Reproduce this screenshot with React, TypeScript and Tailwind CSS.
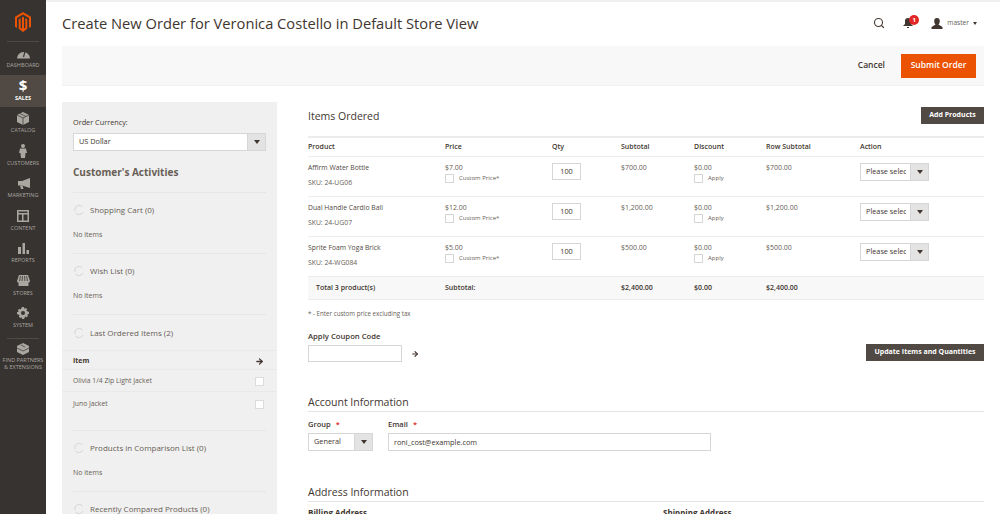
import { ArrowRight, Search } from 'lucide-react';
import type { ReactNode } from 'react';

function Caret() {
  return <span className="block h-0 w-0 border-x-[3px] border-t-[4px] border-x-transparent border-t-[#41362f]" />;
}

function SelectBox({ label, width, textWidth }: { label: string; width: string; textWidth: string }) {
  return (
    <div className={`flex h-[18px] border border-[#d6d6d6] bg-white text-[7.3px] leading-none text-[#41362f] ${width}`}>
      <span className={`flex items-center overflow-hidden whitespace-nowrap pl-[5px] ${textWidth}`}>{label}</span>
      <span className="ml-auto flex w-[18px] items-center justify-center border-l border-[#d6d6d6] bg-[#e3e3e3]">
        <Caret />
      </span>
    </div>
  );
}

function Check({ className = '' }: { className?: string }) {
  return <span className={`block size-[9px] border border-[#d6d6d6] bg-white ${className}`} />;
}

function NavItem({ label, icon, active }: { label: ReactNode; icon: ReactNode; active?: boolean }) {
  return (
    <div
      className={`flex h-[32.5px] flex-col items-center justify-end pb-[5px] text-center text-[5.5px] leading-[7.5px] ${
        active ? 'bg-[#514943] font-bold text-white' : 'text-[#aaa6a0]'
      }`}
    >
      <span className="mb-[2px] flex h-[14px] items-center justify-center">{icon}</span>
      <span>{label}</span>
    </div>
  );
}

const iconFill = '#aaa6a0';

const navItems: { label: string; icon: ReactNode; active?: boolean }[] = [
  {
    label: 'DASHBOARD',
    icon: (
      <svg width="13" height="11" viewBox="0 0 13 11">
        <path d="M0 10.500 A6.500 6.500 0 0 1 13 10.500 Z" fill={iconFill} />
        <path d="M6.500 9 L8 3.500" stroke="#373330" strokeWidth="1.200" />
      </svg>
    ),
  },
  {
    label: 'SALES',
    active: true,
    icon: <span className="text-[15px] font-bold leading-none text-white">$</span>,
  },
  {
    label: 'CATALOG',
    icon: (
      <svg width="12" height="13" viewBox="0 0 12 13">
        <path d="M6 0 L12 3 L12 10 L6 13 L0 10 L0 3 Z" fill={iconFill} />
        <path d="M0 3 L6 6 L12 3 M6 6 L6 13 M3 1.500 L9 4.500" stroke="#373330" strokeWidth="0.700" fill="none" />
      </svg>
    ),
  },
  {
    label: 'CUSTOMERS',
    icon: (
      <svg width="8" height="14" viewBox="0 0 8 14">
        <circle cx="4" cy="2" r="2" fill={iconFill} />
        <path d="M1 4.500 H7 L8 9 H6.500 L6 14 H2 L1.500 9 H0 Z" fill={iconFill} />
      </svg>
    ),
  },
  {
    label: 'MARKETING',
    icon: (
      <svg width="13" height="11" viewBox="0 0 13 11">
        <path d="M13 0 V10 L5 7.500 H1 V3 H5 Z" fill={iconFill} />
        <path d="M3 7.500 H5.500 L6.500 11 H4 Z" fill={iconFill} />
      </svg>
    ),
  },
  {
    label: 'CONTENT',
    icon: (
      <svg width="12" height="12" viewBox="0 0 12 12">
        <path fillRule="evenodd" d="M0 0 H12 V12 H0 Z M1.500 1.500 V3 H10.500 V1.500 Z M1.500 4.500 V10.500 H5 V4.500 Z M6.500 4.500 V10.500 H10.500 V4.500 Z" fill={iconFill} />
      </svg>
    ),
  },
  {
    label: 'REPORTS',
    icon: (
      <svg width="11" height="11" viewBox="0 0 11 11">
        <path d="M0 4 H3 V11 H0 Z M4.500 0 H7 V11 H4.500 Z M8.500 7 H11 V11 H8.500 Z" fill={iconFill} />
      </svg>
    ),
  },
  {
    label: 'STORES',
    icon: (
      <svg width="13" height="11" viewBox="0 0 13 11">
        <path d="M2 0 H11 L13 6 A1.500 1.500 0 0 1 11.500 7.500 H11.500 V11 H1.500 V7.500 A1.500 1.500 0 0 1 0 6 Z" fill={iconFill} />
        <path d="M3.500 1 L2.500 6 M5.500 1 L5 6 M7.500 1 L8 6 M9.500 1 L10.500 6" stroke="#373330" strokeWidth="0.800" />
      </svg>
    ),
  },
  {
    label: 'SYSTEM',
    icon: (
      <svg width="12" height="12" viewBox="0 0 12 12">
        <path
          fillRule="evenodd"
          d="M5 0 H7 L7.300 1.700 L8.800 1 L10.200 2.200 L9.400 3.700 L12 5 V7 L10.300 7.300 L11 8.800 L9.800 10.200 L8.300 9.400 L7 12 H5 L4.700 10.300 L3.200 11 L1.800 9.800 L2.600 8.300 L0 7 V5 L1.700 4.700 L1 3.200 L2.200 1.800 L3.700 2.600 Z M6 4 A2 2 0 1 0 6 8 A2 2 0 1 0 6 4 Z"
          fill={iconFill}
        />
      </svg>
    ),
  },
];

function Sidebar() {
  return (
    <aside className="h-full w-[46px] shrink-0 bg-[#373330]">
      <div className="flex h-[41px] items-start justify-center pt-[12px]">
        <svg width="16" height="20" viewBox="0 0 16 19" preserveAspectRatio="none">
          <path
            d="M8 0 L16 4.600 V14 L14 15.200 V5.800 L8 2.300 L2 5.800 V15.200 L0 14 V4.600 Z M3.700 6.800 L5.700 5.700 V15 L7 15.800 V5 L8 4.400 L9 5 V15.800 L10.300 15 V5.700 L12.300 6.800 V16 L8 19 L3.700 16 Z"
            fill="#eb5202"
          />
        </svg>
      </div>
      <div className="mx-[7px] border-t border-[#4e4a46]" />
      {navItems.map((item) => (
        <NavItem key={item.label} label={item.label} icon={item.icon} active={item.active} />
      ))}
      <div className="mx-[7px] mt-[3px] border-t border-[#4e4a46]" />
      <div className="flex flex-col items-center pt-[4px] text-center text-[5.5px] leading-[7.5px] text-[#aaa6a0]">
        <svg width="12" height="12" viewBox="0 0 12 12" className="mb-[2px]">
          <path d="M6 0 L12 3 V9 L6 12 L0 9 V3 Z" fill={iconFill} />
          <path d="M0 5 L6 8 L12 5 M4 2 L8 4" stroke="#373330" strokeWidth="0.700" fill="none" />
        </svg>
        <span className="whitespace-nowrap">FIND PARTNERS</span>
        <span className="whitespace-nowrap">&amp; EXTENSIONS</span>
      </div>
    </aside>
  );
}

function Spinner() {
  return (
    <svg width="10" height="10" viewBox="0 0 10 10" className="shrink-0">
      <path d="M1 3 A4.500 4.500 0 0 1 8.500 2 M9 7 A4.500 4.500 0 0 1 1.500 8 M1 3 V6" stroke="#d4d4d4" strokeWidth="1" fill="none" />
    </svg>
  );
}

function Activity({ title, children }: { title: string; children?: ReactNode }) {
  return (
    <div className="mx-[11px] border-t border-[#e6e6e6]">
      <div className="flex h-[35px] items-center gap-[6px] pb-[1px] pl-[1px] text-[8px] text-[#676056]">
        <Spinner />
        <span className="whitespace-nowrap">{title}</span>
      </div>
      {children}
    </div>
  );
}

function NoItems() {
  return <div className="pb-[13px] pt-[2px] text-[7px] leading-[10px] text-[#676056]">No items</div>;
}

function LeftPanel() {
  return (
    <div className="h-[412px] w-[215px] shrink-0 overflow-hidden bg-[#f0f0f0]">
      <div className="px-[11px] pt-[15px]">
        <div className="text-[7.3px] leading-[11px] text-[#41362f]">Order Currency:</div>
        <div className="mt-[5px]">
          <SelectBox label="US Dollar" width="w-[193px]" textWidth="w-[170px]" />
        </div>
        <h3 className="mt-[13px] text-[10px] font-bold leading-[16px] text-[#676056]">Customer's Activities</h3>
      </div>
      <div className="mt-[12px]">
        <Activity title="Shopping Cart (0)">
          <NoItems />
        </Activity>
        <Activity title="Wish List (0)">
          <NoItems />
        </Activity>
        <div className="mx-[11px] border-t border-[#e6e6e6]">
          <div className="flex h-[35px] items-center gap-[6px] pl-[1px] text-[8px] text-[#676056]">
            <Spinner />
            <span>Last Ordered Items (2)</span>
          </div>
        </div>
        <div className="flex h-[20px] items-center justify-between border-y border-[#e9e9e9] pl-[11px] pr-[13px] pt-[2px] text-[7px] font-bold text-[#41362f]">
          <span>Item</span>
          <ArrowRight size={9} strokeWidth={3.500} color="#41362f" />
        </div>
        <div className="flex h-[22px] items-center justify-between border-b border-[#e9e9e9] pl-[11px] pr-[13px] pt-[2px] text-[6.8px] text-[#676056]">
          <span>Olivia 1/4 Zip Light Jacket</span>
          <Check className="border-[#dcdcdc]" />
        </div>
        <div className="flex h-[22px] items-center justify-between pl-[11px] pr-[13px] pt-[2px] text-[6.8px] text-[#676056]">
          <span>Juno Jacket</span>
          <Check className="border-[#dcdcdc]" />
        </div>
        <div className="h-[16px]" />
        <Activity title="Products in Comparison List (0)">
          <NoItems />
        </Activity>
        <Activity title="Recently Compared Products (0)" />
      </div>
    </div>
  );
}

const rows = [
  { name: 'Affirm Water Bottle', sku: 'SKU: 24-UG06', price: '$7.00', subtotal: '$700.00' },
  { name: 'Dual Handle Cardio Ball', sku: 'SKU: 24-UG07', price: '$12.00', subtotal: '$1,200.00' },
  { name: 'Sprite Foam Yoga Brick', sku: 'SKU: 24-WG084', price: '$5.00', subtotal: '$500.00' },
];

const gridCols = 'grid grid-cols-[137px_107px_69px_73px_72px_94px_1fr]';

function ItemsTable() {
  return (
    <div className="mt-[17px] border-t-2 border-[#ececec] text-[7px] text-[#41362f]">
      <div className={`${gridCols} h-[19px] items-center border-b border-[#ececec] pt-[1px] font-semibold`}>
        <span>Product</span>
        <span>Price</span>
        <span>Qty</span>
        <span>Subtotal</span>
        <span>Discount</span>
        <span>Row Subtotal</span>
        <span>Action</span>
      </div>
      {rows.map((row) => (
        <div key={row.sku} className={`${gridCols} h-[40px] border-b border-[#ececec] pt-[5px] text-[#676056]`}>
          <div className="leading-[11px]">
            <div className="text-[6.8px] text-[#514943]">{row.name}</div>
            <div className="mt-[4px] text-[6.8px]">{row.sku}</div>
          </div>
          <div className="leading-[11px]">
            <div>{row.price}</div>
            <div className="flex items-center gap-[5px] text-[6px]">
              <Check />
              <span>Custom Price*</span>
            </div>
          </div>
          <div>
            <div className="mt-[1px] flex h-[17px] w-[29px] items-center justify-center border border-[#d6d6d6] bg-white text-[7.3px] text-[#41362f]">
              100
            </div>
          </div>
          <div className="leading-[11px]">{row.subtotal}</div>
          <div className="leading-[11px]">
            <div>$0.00</div>
            <div className="flex items-center gap-[5px] text-[6px]">
              <Check />
              <span>Apply</span>
            </div>
          </div>
          <div className="leading-[11px]">{row.subtotal}</div>
          <div className="mt-[1px]">
            <SelectBox label="Please select" width="w-[69px]" textWidth="w-[45px]" />
          </div>
        </div>
      ))}
      <div className={`${gridCols} h-[23px] items-center border-b border-[#ececec] bg-[#f8f8f8] font-semibold`}>
        <span className="pl-[8px]">Total 3 product(s)</span>
        <span>Subtotal:</span>
        <span />
        <span>$2,400.00</span>
        <span>$0.00</span>
        <span>$2,400.00</span>
        <span />
      </div>
    </div>
  );
}

function SectionTitle({ children }: { children: ReactNode }) {
  return <h2 className="border-b border-[#e3e3e3] pb-[1px] text-[10.5px] leading-[16px] text-[#41362f]">{children}</h2>;
}

function RequiredLabel({ children }: { children: ReactNode }) {
  return (
    <div className="text-[7.5px] font-semibold leading-[11px] text-[#41362f]">
      {children}
      <span className="ml-[5px] text-[#e22626]">*</span>
    </div>
  );
}

function RightPanel() {
  return (
    <div className="min-w-0 flex-1">
      <div className="flex h-[17px] items-center justify-between pt-[10px]">
        <h2 className="text-[10.5px] leading-[16px] text-[#41362f]">Items Ordered</h2>
        <button className="h-[17px] w-[63px] bg-[#514943] text-[7px] font-bold text-white">Add Products</button>
      </div>
      <ItemsTable />
      <div className="mt-[9px] text-[6.2px] leading-[9px] text-[#676056]">* - Enter custom price excluding tax</div>
      <div className="mt-[13px] flex items-end justify-between">
        <div>
          <div className="text-[7.7px] font-semibold leading-[11px] text-[#41362f]">Apply Coupon Code</div>
          <div className="mt-[3px] flex items-center gap-[9px]">
            <div className="h-[17px] w-[94px] border border-[#d6d6d6] bg-white" />
            <ArrowRight size={8} strokeWidth={3.500} color="#41362f" />
          </div>
        </div>
        <button className="mb-[1px] h-[17px] w-[118px] bg-[#514943] text-[7px] font-bold text-white">
          Update Items and Quantities
        </button>
      </div>
      <div className="mt-[32px]">
        <SectionTitle>Account Information</SectionTitle>
      </div>
      <div className="mt-[7px] flex gap-[15px]">
        <div>
          <RequiredLabel>Group</RequiredLabel>
          <div className="mt-[3px]">
            <SelectBox label="General" width="w-[65px]" textWidth="w-[46px]" />
          </div>
        </div>
        <div>
          <RequiredLabel>Email</RequiredLabel>
          <div className="mt-[3px] flex h-[18px] w-[323px] items-center border border-[#d6d6d6] bg-white pl-[5px] text-[7.3px] text-[#41362f]">
            roni_cost@example.com
          </div>
        </div>
      </div>
      <div className="mt-[33px]">
        <SectionTitle>Address Information</SectionTitle>
      </div>
      <div className="mt-[5px] flex text-[8px] font-bold leading-[11px] text-[#41362f]">
        <span className="w-[355px]">Billing Address</span>
        <span>Shipping Address</span>
      </div>
    </div>
  );
}

export default function App() {
  return (
    <div className="flex h-[514px] w-[1000px] overflow-hidden bg-white font-['Open_Sans',sans-serif]">
      <Sidebar />
      <main className="min-w-0 flex-1">
        <header className="flex h-[46px] items-center justify-between border-t-2 border-[#f0f0f0] pb-[2px] pl-[16px] pr-[23px]">
          <h1 className="text-[14.7px] leading-[20px] text-[#41362f]">
            Create New Order for Veronica Costello in Default Store View
          </h1>
          <div className="flex items-center text-[#41362f]">
            <Search size={12} strokeWidth={2.200} />
            <span className="relative ml-[18px] mr-[18px]">
              <svg width="10" height="10" viewBox="0 0 10 10" className="block">
                <path d="M5 0 A3 3 0 0 1 8 3 V6 L10 8 H0 L2 6 V3 A3 3 0 0 1 5 0 Z M4 9 H6 V10 H4 Z" fill="#41362f" />
              </svg>
              <span className="absolute -right-[6px] -top-[3px] flex size-[10px] items-center justify-center rounded-full bg-[#e22626] text-[6px] font-bold leading-none text-white">
                1
              </span>
            </span>
            <svg width="12" height="11" viewBox="0 0 11 11">
              <path d="M5.500 0 A2.800 3.200 0 0 1 8.300 3.200 C8.300 5 7.300 6 7 6.600 L11 9 V11 H0 V9 L4 6.600 C3.700 6 2.700 5 2.700 3.200 A2.800 3.200 0 0 1 5.500 0 Z" fill="#41362f" />
            </svg>
            <span className="ml-[4px] text-[6.6px] text-[#676056]">master</span>
            <span className="ml-[4px] block h-0 w-0 border-x-[2px] border-t-[3px] border-x-transparent border-t-[#41362f]" />
          </div>
        </header>
        <div className="mx-[16px] flex h-[40px] items-center justify-end border-b border-[#f2f2f2] bg-[#f8f8f8] pr-[8px]">
          <span className="text-[8.5px] font-semibold text-[#41362f]">Cancel</span>
          <button className="ml-[16px] h-[24px] w-[75px] bg-[#eb5202] text-[8.5px] font-semibold text-white">
            Submit Order
          </button>
        </div>
        <div className="ml-[16px] mr-[16px] mt-[16px] flex gap-[31px]">
          <LeftPanel />
          <RightPanel />
        </div>
      </main>
    </div>
  );
}
